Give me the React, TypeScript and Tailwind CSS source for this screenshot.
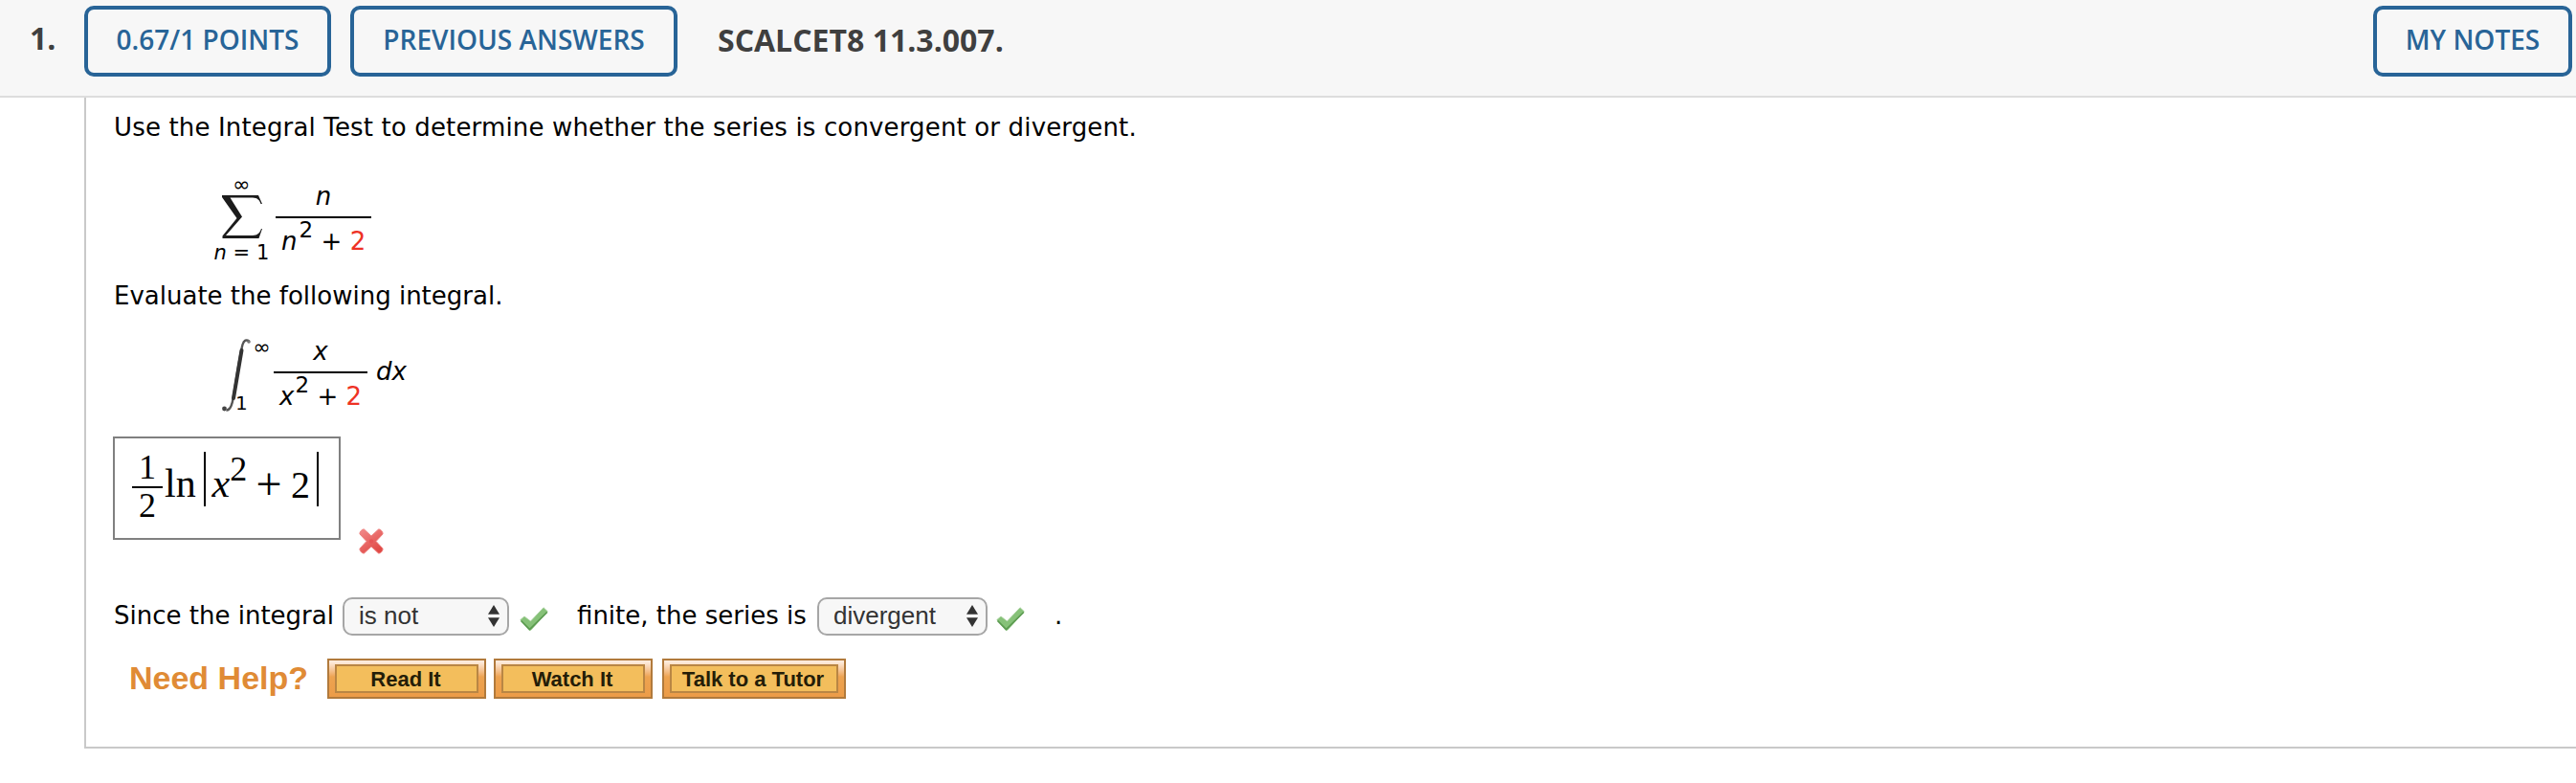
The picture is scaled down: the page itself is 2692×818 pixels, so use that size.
import React from 'react';

const HeaderButton: React.FC<{ label: string; className: string }> = ({ label, className }) => (
  <button
    className={`mt-1.5 flex h-[74px] shrink-0 justify-center rounded-[10px] border-4 border-[#286497] pt-3 text-[28px] leading-[38px] font-semibold whitespace-nowrap text-[#286497] ${className}`}
  >
    {label}
  </button>
);

const Fraction: React.FC<{ variable: string; className: string; supClass: string }> = ({
  variable,
  className,
  supClass,
}) => (
  <div className={`flex shrink-0 flex-col ${className}`}>
    <div className="text-center leading-8 italic">{variable}</div>
    <div className="mt-[5px] h-0.5 bg-black" />
    <div className="mt-2 flex items-start pl-1.5 leading-8">
      <span className="italic">{variable}</span>
      <span className={`-mt-[11px] text-[23px] leading-[31px] ${supClass}`}>2</span>
      <span className="ml-[8.4px]">+</span>
      <span className="ml-[8.4px] text-[#ee3224]">2</span>
    </div>
  </div>
);

const SumSymbol = () => (
  <svg className="h-[45px] w-[42px]" viewBox="0 0 42 45">
    <path
      d="M0 0H38L42 9H40.5C39.5 5 37 2.6 32 2.4H8.5L21 22.5L4 42H32C37 41.8 39.5 39.5 41 35H42L38.5 45H0.5V42.5L15.5 24L0 2Z"
      fill="#1c1c1c"
    />
  </svg>
);

const IntegralSymbol = () => (
  <svg className="mt-[3px] h-[76px] w-[30px] shrink-0" viewBox="0 0 30 76" fill="none">
    <path
      d="M28.5 2.5C25.5 0.5 23 1.2 21.5 6C18 20 15 42 12 60C10.5 70 8 75 4.5 74.5"
      stroke="#555"
      strokeWidth="2.4"
    />
    <path d="M20.5 12C18 26 15.5 42 12 62" stroke="#333" strokeWidth="4" strokeLinecap="round" />
    <circle cx="2.5" cy="73" r="2.4" fill="#444" />
    <circle cx="28" cy="3" r="1.8" fill="#777" />
  </svg>
);

const CrossIcon = () => (
  <svg className="mt-24 ml-[19px] h-[27px] w-[26px]" viewBox="0 0 26 27">
    <defs>
      <linearGradient id="cross" x1="0" y1="0" x2="0.6" y2="1">
        <stop offset="0" stopColor="#f28c8c" />
        <stop offset="1" stopColor="#e04a46" />
      </linearGradient>
    </defs>
    <path
      d="M5.5 1L13 8L20.5 1C22.5 0.5 25.5 3.5 25 6L18 13.5L25 21C25.5 23.5 22.5 26.5 20.5 26L13 19L5.5 26C3.5 26.5 0.5 23.5 1 21L8 13.5L1 6C0.5 3.5 3.5 0.5 5.5 1Z"
      fill="url(#cross)"
      stroke="#ee8280"
      strokeWidth="1"
    />
    <circle cx="13" cy="13.5" r="2.2" fill="#e65555" />
  </svg>
);

const CheckIcon: React.FC<{ className: string }> = ({ className }) => (
  <svg className={`mt-2.5 h-[25px] w-[30px] shrink-0 ${className}`} viewBox="0 0 30 25">
    <path
      d="M0.8 13.5L5 10L11.5 15L25 0.8L29.3 4.8L12 24.2H9.8Z"
      fill="#86c178"
      stroke="#a5cf9b"
      strokeWidth="0.8"
      strokeLinejoin="round"
    />
    <path d="M1.5 14.5L10.5 23.5L28.8 5.5" fill="none" stroke="#5b9a50" strokeWidth="1.7" />
  </svg>
);

const Select: React.FC<{ value: string; className: string }> = ({ value, className }) => (
  <div
    className={`flex h-10 shrink-0 items-start justify-between rounded-[10px] border-2 border-[#a6a6a6] bg-[#f7f7f7] pr-2 pl-[15px] ${className}`}
  >
    <span className="mt-0.5 font-['Liberation_Sans',Arial,sans-serif] leading-[30px] text-[#333]">{value}</span>
    <svg className="mt-1.5 h-[23px] w-3" viewBox="0 0 12 23" fill="#333">
      <path d="M6 0L12 9.7H0Z" />
      <path d="M0 13.3H12L6 23Z" />
    </svg>
  </div>
);

const HelpButton: React.FC<{ label: string; className: string }> = ({ label, className }) => (
  <button
    className={`h-[42px] shrink-0 border-2 border-[#b17a3c] bg-linear-to-b from-[#fdeada] from-5% via-[#eda350] via-45% to-[#ec9c48] px-1.5 py-1 ${className}`}
  >
    <span className="block h-[30px] border-2 border-[#b98644] bg-[#f3be5c] pt-px pr-0.5 text-center text-[22px] leading-[25px] font-bold whitespace-nowrap text-[#241d08]">
      {label}
    </span>
  </button>
);

const Answer = () => (
  <div className="flex h-[108px] w-[238px] shrink-0 items-start border-2 border-[#808080] pl-[18px] font-['Liberation_Serif','Times_New_Roman',serif] text-[42px] leading-[46px]">
    <div className="mt-2.5 w-8 text-center text-[36px] leading-10">
      <div>1</div>
      <div className="h-0.5 bg-black" />
      <div className="-mt-0.5">2</div>
    </div>
    <span className="mt-6 ml-0.5">ln</span>
    <div className="mt-3.5 ml-[8.3px] h-[57px] w-0.5 bg-black" />
    <span className="mt-6 ml-[6.5px] italic">x</span>
    <span className="mt-3 text-[36px] leading-10">2</span>
    <span className="mt-[21px] ml-[9.4px] text-[48px] leading-[53px]">+</span>
    <span className="mt-[26px] ml-[9.3px] text-[40px] leading-[45px]">2</span>
    <div className="mt-3.5 ml-[7px] h-[57px] w-0.5 bg-black" />
  </div>
);

export default function App() {
  return (
    <div className="h-[818px] w-full overflow-hidden bg-white font-['DejaVu_Sans',Verdana,sans-serif] text-[26px] leading-8 text-black">
      <header className="flex h-[102px] items-start border-b-2 border-[#ddd] bg-[#f7f7f7] pr-1 font-['Open_Sans',sans-serif]">
        <span className="mt-[18px] w-[88px] shrink-0 pl-[31px] text-[32px] leading-[43px] font-bold text-[#3f3f3f]">1.</span>
        <HeaderButton label="0.67/1 POINTS" className="w-[258px]" />
        <HeaderButton label="PREVIOUS ANSWERS" className="ml-5 w-[342px]" />
        <span className="mt-5 ml-[42px] text-[32px] leading-[43px] font-bold whitespace-nowrap text-[#3f3f3f]">
          SCALCET8 11.3.007.
        </span>
        <HeaderButton label="MY NOTES" className="ml-auto w-[208px]" />
      </header>

      <main className="ml-[88px] h-[680px] border-b-2 border-l-2 border-[#c9c9c9] pt-[15px] pl-7">
        <p className="pl-px tracking-[0.15px] whitespace-nowrap">
          Use the Integral Test to determine whether the series is convergent or divergent.
        </p>

        <div className="flex h-36 items-start pt-8 pl-[104px]">
          <div className="flex w-[61px] shrink-0 flex-col items-center text-[20px] leading-6">
            <span className="h-[23px] text-[22px]">∞</span>
            <SumSymbol />
            <span className="mt-[3px] text-[21px] tracking-[0.1px] whitespace-nowrap">
              <i>n</i> = 1
            </span>
          </div>
          <Fraction variable="n" className="mt-2 ml-[5px] w-[100px]" supClass="ml-0.5" />
        </div>

        <p className="pl-px">Evaluate the following integral.</p>

        <div className="flex h-[131px] items-start pt-[26px] pl-[114px]">
          <IntegralSymbol />
          <div className="-ml-4 flex w-10 shrink-0 flex-col text-[20px] leading-6">
            <span className="pl-[18.5px] text-[22px]">∞</span>
            <span className="mt-[34px]">1</span>
          </div>
          <Fraction variable="x" className="w-[98px]" supClass="ml-px" />
          <span className="mt-[21px] ml-[9px] italic">dx</span>
        </div>

        <div className="flex h-[168px] items-start">
          <Answer />
          <CrossIcon />
        </div>

        <div className="flex h-10 items-start whitespace-nowrap">
          <span className="mt-[3px] w-60 shrink-0 pl-px">Since the integral</span>
          <Select value="is not" className="w-[174px]" />
          <CheckIcon className="ml-[11px]" />
          <span className="mt-[3px] ml-[30px] w-[251px] shrink-0">finite, the series is</span>
          <Select value="divergent" className="w-[178px]" />
          <CheckIcon className="ml-[9px]" />
          <span className="mt-[3px] ml-[31px]">.</span>
        </div>

        <div className="mt-6 flex items-start pl-[17px] font-['Liberation_Sans',Arial,sans-serif]">
          <span className="mt-px w-[207px] shrink-0 text-[34px] leading-[38px] font-bold whitespace-nowrap text-[#e08b35]">
            Need Help?
          </span>
          <HelpButton label="Read It" className="w-[166px]" />
          <HelpButton label="Watch It" className="ml-2 w-[166px]" />
          <HelpButton label="Talk to a Tutor" className="ml-2.5 w-48" />
        </div>
      </main>
    </div>
  );
}
